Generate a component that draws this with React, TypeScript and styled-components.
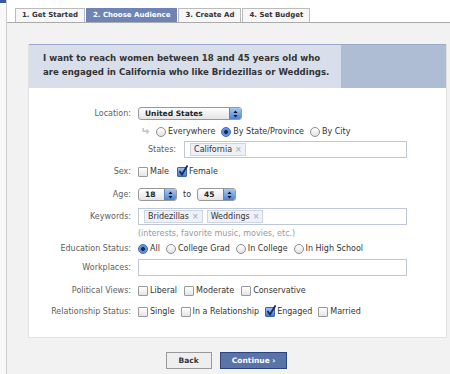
import styled, { createGlobalStyle } from "styled-components";

const GlobalStyle = createGlobalStyle`
  body {
    margin: 0;
    background: #fff;
    font-family: "DejaVu Sans", "Liberation Sans", sans-serif;
    font-size: 8px;
    color: #333;
  }
`;

const Page = styled.div`
  display: flex;
  width: 450px;
  height: 374px;
  overflow: hidden;
`;

const Gutter = styled.div`
  width: 6px;
  flex-shrink: 0;
  background: #f8f8f8;
  &::before {
    content: "";
    display: block;
    height: 3px;
    background: #3b5998;
  }
`;

const Main = styled.div`
  flex: 1;
  border-left: 1px solid #cdcdcd;
  display: flex;
  flex-direction: column;
`;

const TabBar = styled.div`
  display: flex;
  padding: 8px 0 0 8px;
  border-bottom: 1px solid #aaa;
  background: #fff;
`;

const Tab = styled.div<{ $active?: boolean }>`
  height: 13px;
  line-height: 13px;
  padding: 0 6px;
  margin-right: 1px;
  border: 1px solid ${(p) => (p.$active ? "#6d84b4" : "#bbb")};
  border-bottom: none;
  background: ${(p) => (p.$active ? "#6d84b4" : "#f7f7f7")};
  color: ${(p) => (p.$active ? "#fff" : "#333")};
  font-size: 7px;
  font-weight: bold;
`;

const Panel = styled.div`
  flex: 1;
  background: #f2f2f2;
  padding: 21px 3px 0 21px;
`;

const Card = styled.div`
  background: #fff;
  border: 1px solid #e2e2e2;
  border-top: none;
`;

const Banner = styled.div`
  display: flex;
  height: 43px;
  border-top: 1px solid #99a9cb;
`;

const BannerText = styled.div`
  width: 298px;
  padding: 6px 0 0 14px;
  background: #d8dfea;
  font-size: 8.6px;
  font-weight: bold;
  line-height: 14px;
  color: #333;
`;

const BannerSide = styled.div`
  flex: 1;
  background: #afbdd4;
`;

const Form = styled.div`
  padding: 19px 0 20px 0;
`;

const Row = styled.div<{ $top?: number }>`
  display: grid;
  grid-template-columns: 102px 269px;
  column-gap: 7px;
  align-items: center;
  margin-top: ${(p) => p.$top ?? 0}px;
`;

const Label = styled.div`
  text-align: right;
  color: #5e5e5e;
  line-height: 10px;
`;

const Controls = styled.div<{ $gap?: number; $indent?: number }>`
  display: flex;
  align-items: center;
  gap: ${(p) => p.$gap ?? 8}px;
  padding-left: ${(p) => p.$indent ?? 0}px;
  line-height: 10px;
`;

const Option = styled.span`
  display: inline-flex;
  align-items: center;
  gap: 2px;
  color: #333;
`;

const Radio = styled.span<{ $on?: boolean }>`
  width: 8px;
  height: 8px;
  border-radius: 50%;
  border: 1px solid ${(p) => (p.$on ? "#3a66b0" : "#8c8c8c")};
  background: ${(p) =>
    p.$on
      ? "radial-gradient(circle, #1b2a4a 0 1.6px, #4f86d8 2.2px, #8fb8ee 100%)"
      : "linear-gradient(#fff, #e2e2e2)"};
`;

const Box = styled.span<{ $on?: boolean }>`
  position: relative;
  width: 8px;
  height: 8px;
  border-radius: 1px;
  border: 1px solid ${(p) => (p.$on ? "#3a66b0" : "#999")};
  background: ${(p) =>
    p.$on ? "linear-gradient(#9cc0f0, #3f7ad4)" : "linear-gradient(#fff, #e4e4e4)"};
  svg {
    position: absolute;
    left: 0;
    top: -3px;
  }
`;

const Select = styled.div<{ $w: number }>`
  display: flex;
  align-items: center;
  width: ${(p) => p.$w}px;
  height: 11px;
  border: 1px solid #999;
  border-radius: 3px;
  background: linear-gradient(#fff, #e4e4e4);
  overflow: hidden;
`;

const SelectText = styled.span`
  flex: 1;
  padding-left: 6px;
  color: #222;
  font-weight: bold;
  font-size: 7.5px;
`;

const Stepper = styled.span`
  width: 11px;
  height: 11px;
  display: flex;
  align-items: center;
  justify-content: center;
  background: linear-gradient(#a9c8f2, #4b83d6);
  border-left: 1px solid #5a84c4;
`;

const TextBox = styled.div<{ $w: number }>`
  display: flex;
  align-items: center;
  gap: 4px;
  width: ${(p) => p.$w}px;
  height: 17px;
  padding: 0 5px;
  box-sizing: border-box;
  border: 1px solid #bdc7d8;
  background: #fff;
`;

const Token = styled.span`
  display: inline-flex;
  align-items: center;
  gap: 3px;
  height: 11px;
  padding: 0 3px;
  border: 1px solid #ccd5e4;
  background: #eef1f7;
  color: #333;
  b {
    font-weight: normal;
    color: #9aa6bd;
  }
`;

const SubRow = styled.div`
  display: flex;
  align-items: center;
  gap: 8px;
  padding-left: 10px;
`;

const Hint = styled.div`
  color: #999;
  line-height: 10px;
`;

const Buttons = styled.div`
  display: flex;
  justify-content: center;
  gap: 8px;
  margin-top: 14px;
  padding-right: 22px;
`;

const Button = styled.button<{ $primary?: boolean }>`
  height: 17px;
  padding: 0 ${(p) => (p.$primary ? 11 : 12)}px;
  font-family: inherit;
  font-size: 7.5px;
  font-weight: bold;
  border: 1px solid ${(p) => (p.$primary ? "#29447e" : "#999")};
  background: ${(p) => (p.$primary ? "#5b74a8" : "#eee")};
  color: ${(p) => (p.$primary ? "#fff" : "#333")};
`;

function Arrows() {
  return (
    <svg width="5" height="8" viewBox="0 0 5 8">
      <path d="M2.5 0.5 L4.5 3 L0.5 3 Z M2.5 7.5 L4.5 5 L0.5 5 Z" fill="#111" />
    </svg>
  );
}

function Check() {
  return (
    <svg width="10" height="11" viewBox="0 0 10 11">
      <path d="M1.5 6 L4 9.5 L9.5 0.5" stroke="#1c2c50" strokeWidth="1.8" fill="none" />
    </svg>
  );
}

function Turn() {
  return (
    <svg width="9" height="8" viewBox="0 0 9 8">
      <path d="M1.5 0 V4 H5.5 V6.5 L8.5 3.5 L5.5 0.5 V2.5 H3 V0 Z" fill="#c4c4c4" />
    </svg>
  );
}

function CheckOpt({ label, on }: { label: string; on?: boolean }) {
  return (
    <Option>
      <Box $on={on}>{on && <Check />}</Box>
      {label}
    </Option>
  );
}

function RadioOpt({ label, on }: { label: string; on?: boolean }) {
  return (
    <Option>
      <Radio $on={on} />
      {label}
    </Option>
  );
}

function Dropdown({ value, width }: { value: string; width: number }) {
  return (
    <Select $w={width}>
      <SelectText>{value}</SelectText>
      <Stepper>
        <Arrows />
      </Stepper>
    </Select>
  );
}

export default function App() {
  return (
    <>
      <GlobalStyle />
      <Page>
        <Gutter />
        <Main>
          <TabBar>
            <Tab>1. Get Started</Tab>
            <Tab $active>2. Choose Audience</Tab>
            <Tab>3. Create Ad</Tab>
            <Tab>4. Set Budget</Tab>
          </TabBar>
          <Panel>
            <Card>
              <Banner>
                <BannerText>
                  I want to reach women between 18 and 45 years old who
                  <br />
                  are engaged in California who like Bridezillas or Weddings.
                </BannerText>
                <BannerSide />
              </Banner>
              <Form>
                <Row>
                  <Label>Location:</Label>
                  <Controls>
                    <Dropdown value="United States" width={102} />
                  </Controls>
                </Row>
                <Row $top={7}>
                  <span />
                  <Controls $gap={6} $indent={3}>
                    <Turn />
                    <RadioOpt label="Everywhere" />
                    <RadioOpt label="By State/Province" on />
                    <RadioOpt label="By City" />
                  </Controls>
                </Row>
                <Row $top={4}>
                  <span />
                  <SubRow>
                    <Label>States:</Label>
                    <TextBox $w={223}>
                      <Token>
                        California <b>×</b>
                      </Token>
                    </TextBox>
                  </SubRow>
                </Row>
                <Row $top={9}>
                  <Label>Sex:</Label>
                  <Controls>
                    <CheckOpt label="Male" />
                    <CheckOpt label="Female" on />
                  </Controls>
                </Row>
                <Row $top={11}>
                  <Label>Age:</Label>
                  <Controls $gap={6}>
                    <Dropdown value="18" width={37} />
                    <Option>to</Option>
                    <Dropdown value="45" width={37} />
                  </Controls>
                </Row>
                <Row $top={7}>
                  <Label>Keywords:</Label>
                  <TextBox $w={269}>
                    <Token>
                      Bridezillas <b>×</b>
                    </Token>
                    <Token>
                      Weddings <b>×</b>
                    </Token>
                  </TextBox>
                </Row>
                <Row $top={4}>
                  <span />
                  <Hint>(interests, favorite music, movies, etc.)</Hint>
                </Row>
                <Row $top={5}>
                  <Label>Education Status:</Label>
                  <Controls $gap={6}>
                    <RadioOpt label="All" on />
                    <RadioOpt label="College Grad" />
                    <RadioOpt label="In College" />
                    <RadioOpt label="In High School" />
                  </Controls>
                </Row>
                <Row $top={5}>
                  <Label>Workplaces:</Label>
                  <TextBox $w={269} />
                </Row>
                <Row $top={10}>
                  <Label>Political Views:</Label>
                  <Controls $gap={7}>
                    <CheckOpt label="Liberal" />
                    <CheckOpt label="Moderate" />
                    <CheckOpt label="Conservative" />
                  </Controls>
                </Row>
                <Row $top={11}>
                  <Label>Relationship Status:</Label>
                  <Controls $gap={6}>
                    <CheckOpt label="Single" />
                    <CheckOpt label="In a Relationship" />
                    <CheckOpt label="Engaged" on />
                    <CheckOpt label="Married" />
                  </Controls>
                </Row>
              </Form>
            </Card>
            <Buttons>
              <Button>Back</Button>
              <Button $primary>Continue ›</Button>
            </Buttons>
          </Panel>
        </Main>
      </Page>
    </>
  );
}
